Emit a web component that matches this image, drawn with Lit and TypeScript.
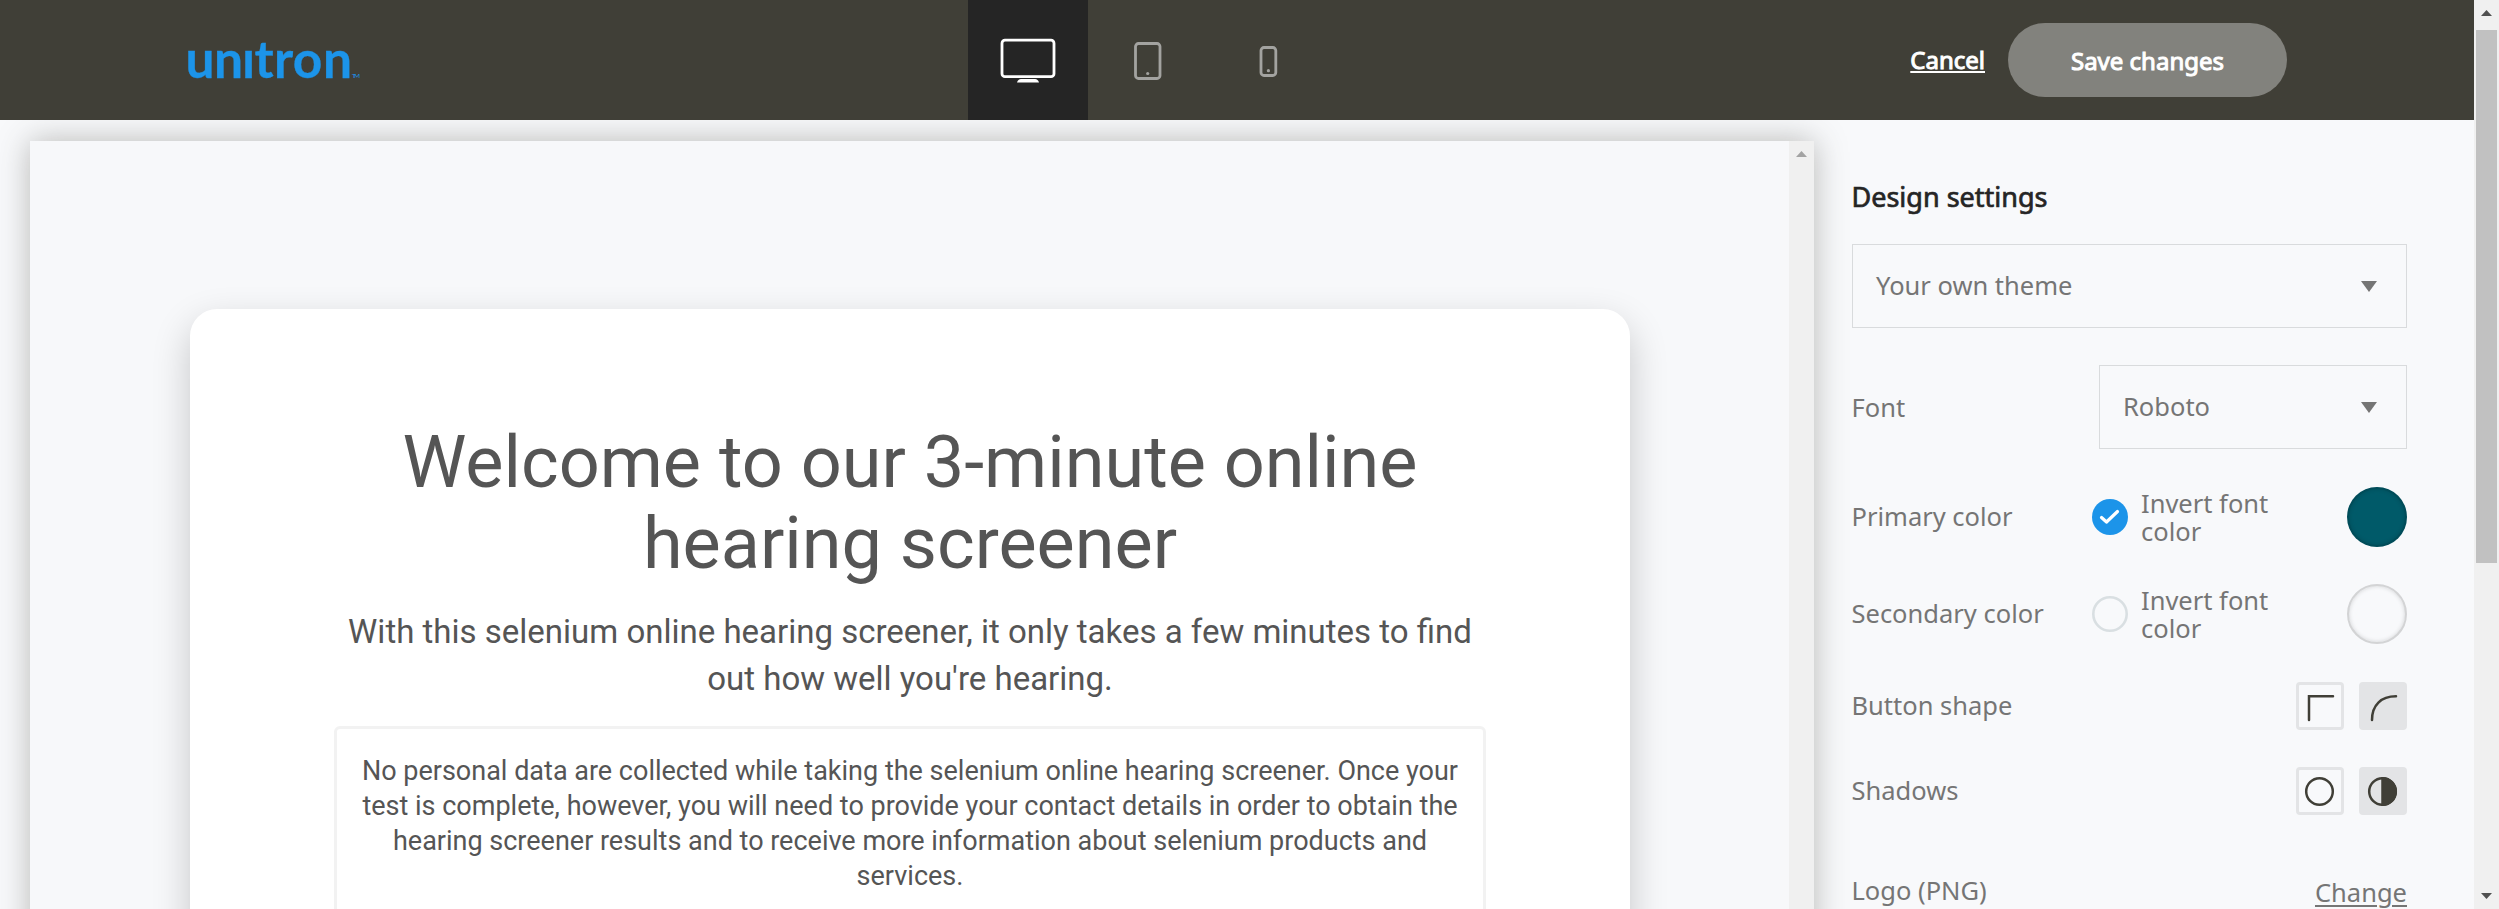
import { LitElement, html, css, svg } from "lit";
import { customElement, property } from "lit/decorators.js";

@customElement("scroll-bar")
class ScrollBar extends LitElement {
  @property({ type: Boolean }) page = false;
  static styles = css`
    :host { display: flex; flex-direction: column; width: 25px; background: #f0f0f0; flex: none; }
    .btn { height: 30px; flex: none; display: block; }
    .thumb { height: 533px; margin: 0 2px; background: #c1c1c1; }
    .gap { flex: 1; }
    .last { height: 26px; flex: none; display: block; }
  `;
  render() {
    return html`
      <svg class="btn" width="25" height="30"><path d="M7 16 L12.5 10 L18 16Z" fill=${this.page ? "#505050" : "#a3a3a3"} /></svg>
      ${this.page
        ? html`<div class="thumb"></div><div class="gap"></div>
            <svg class="last" width="25" height="26"><path d="M7 10 L18 10 L12.5 16Z" fill="#505050" /></svg>`
        : ""}
    `;
  }
}

@customElement("top-bar")
class TopBar extends LitElement {
  static styles = css`
    :host { display: flex; height: 120px; background: #403f37; position: relative; z-index: 1; font-family: "Noto Sans", sans-serif; color: #fff; }
    svg { display: block; }
    .brand { width: 968px; flex: none; }
    .device { width: 120px; height: 120px; flex: none; }
    .active { background: #252525; }
    .actions { margin-left: auto; padding-right: 187px; display: flex; align-items: center; gap: 23px; font-size: 24px; line-height: 36px; -webkit-text-stroke: 1px #fff; }
    .cancel { text-decoration: underline; text-decoration-thickness: 2px; text-underline-offset: 2px; }
    .save { box-sizing: border-box; width: 279px; height: 74px; border-radius: 37px; background: #82827d; text-align: center; line-height: 76px; }
  `;
  render() {
    return html`
      <svg class="brand" width="968" height="120" fill="#1c94e9">
        <text x="185.5 214 242 254.5 274 292.8 323" y="78.3" font-family="Lato, sans-serif" font-weight="700" font-size="51.5" stroke="#1c94e9" stroke-width="0.3">unıtron</text>
        <text x="352" y="78" font-family="Lato, sans-serif" font-size="6.5" textLength="8">TM</text>
      </svg>
      <svg class="device active" width="120" height="120">
        <rect x="34" y="40.2" width="52" height="36.5" rx="3" fill="none" stroke="#fff" stroke-width="2.8" />
        <path d="M49 82.5 q1-3.5 4-3.5 h14 q3 0 4 3.5z" fill="#fff" />
      </svg>
      <svg class="device" width="120" height="120">
        <rect x="47.5" y="43.5" width="24.5" height="35" rx="3" fill="none" stroke="#a3a3a0" stroke-width="2.8" />
        <circle cx="59.7" cy="73.5" r="1.6" fill="#a3a3a0" />
      </svg>
      <svg class="device" width="120" height="120">
        <rect x="53" y="47.5" width="14.8" height="28" rx="3" fill="none" stroke="#a3a3a0" stroke-width="2.8" />
        <circle cx="60.4" cy="70.7" r="1.6" fill="#a3a3a0" />
      </svg>
      <div class="actions"><span class="cancel">Cancel</span><div class="save">Save changes</div></div>
    `;
  }
}

@customElement("screener-preview")
class ScreenerPreview extends LitElement {
  static styles = css`
    :host { display: flex; width: 1784px; height: 900px; flex: none; background: #f7f8fa; font-family: Roboto, sans-serif; color: #555; box-shadow: 0 0 30px rgba(64, 63, 55, 0.35); }
    .view { flex: 1; padding: 168px 159px 0 160px; overflow: hidden; }
    .card { box-sizing: border-box; height: 900px; border-radius: 27px; background: #fff; padding: 113px 144px 0; box-shadow: 0 15px 38px rgba(0, 0, 0, 0.2); text-align: center; }
    h1 { margin: 0; font-weight: 400; font-size: 72px; line-height: 81px; }
    .lead { margin: 24px 0 24px; font-size: 33px; line-height: 47px; }
    .note { box-sizing: border-box; height: 400px; border: 3px solid #f2f2f2; border-radius: 6px; padding: 25px 20px; font-size: 27px; line-height: 35px; }
    .line { display: block; white-space: nowrap; }
  `;
  render() {
    return html`
      <div class="view">
        <div class="card">
          <h1><span class="line">Welcome to our 3-minute online</span><span class="line">hearing screener</span></h1>
          <div class="lead"><span class="line">With this selenium online hearing screener, it only takes a few minutes to find</span><span class="line">out how well you're hearing.</span></div>
          <div class="note">
            <span class="line">No personal data are collected while taking the selenium online hearing screener. Once your</span>
            <span class="line">test is complete, however, you will need to provide your contact details in order to obtain the</span>
            <span class="line">hearing screener results and to receive more information about selenium products and</span>
            <span class="line">services.</span>
          </div>
        </div>
      </div>
      <scroll-bar></scroll-bar>
    `;
  }
}

@customElement("design-settings")
class DesignSettings extends LitElement {
  static styles = css`
    :host { display: block; box-sizing: border-box; width: 593px; padding: 36px 0 0 38px; font-family: "Noto Sans", sans-serif; font-size: 25.5px; line-height: 28px; color: #757575; }
    svg { display: block; }
    h2 { margin: 0 0 27px -0.5px; font-size: 27px; line-height: 40px; font-weight: 400; color: #252525; -webkit-text-stroke: 0.7px #252525; }
    .select { box-sizing: border-box; width: 555px; height: 84px; border: 1px solid #d9dbdd; display: flex; align-items: center; justify-content: space-between; padding: 0 29px 0 23px; }
    .row { display: flex; align-items: center; width: 555px; }
    .label { box-sizing: border-box; width: 247.5px; margin-left: -0.5px; flex: none; padding-bottom: 3px; }
    .select span { padding-bottom: 2px; }
    .font { margin-top: 37px; }
    .font .select { width: 308px; }
    .font .label { padding-bottom: 1px; }
    .primary { margin-top: 38px; height: 60px; }
    .secondary { margin-top: 37px; height: 60px; }
    .check { margin-left: -7px; width: 36px; height: 36px; margin-right: 13px; flex: none; }
    .invert { width: 150px; }
    .swatch { box-sizing: border-box; width: 60px; height: 60px; border-radius: 50%; margin-left: auto; border: 2px solid rgba(0, 0, 0, 0.15); box-shadow: inset 0 0 4px rgba(0, 0, 0, 0.15); }
    .teal { background: #005a69; }
    .shape { margin-top: 38px; height: 48px; }
    .shadows { margin-top: 37px; height: 48px; }
    .options { display: flex; gap: 15px; margin-left: auto; }
    .opt { box-sizing: border-box; width: 48px; height: 48px; border: 3px solid #e3e4e6; border-radius: 4px; }
    .on { background: #e3e4e6; }
    .logo { margin-top: 61px; align-items: flex-start; }
    .change { margin-left: auto; padding-top: 2px; text-decoration: underline; text-decoration-thickness: 2px; text-underline-offset: 3px; }
  `;
  arrow() {
    return html`<svg width="16" height="11"><path d="M0 0H16L8 11Z" fill="#757575" /></svg>`;
  }
  option(on: boolean, glyph: unknown) {
    return html`<div class="opt ${on ? "on" : ""}"><svg width="42" height="42" fill="none" stroke="#403f37" stroke-width="2.5">${glyph}</svg></div>`;
  }
  render() {
    return html`
      <h2>Design settings</h2>
      <div class="select"><span>Your own theme</span>${this.arrow()}</div>
      <div class="row font"><div class="label">Font</div><div class="select"><span>Roboto</span>${this.arrow()}</div></div>
      <div class="row primary">
        <div class="label">Primary color</div>
        <svg class="check" width="36" height="36"><circle cx="18" cy="18" r="18" fill="#1c94e9" /><path d="M9.5 18.5 L14.5 23 L25.5 12.5" fill="none" stroke="#fff" stroke-width="3.2" stroke-linecap="round" stroke-linejoin="round" /></svg>
        <div class="invert">Invert font color</div>
        <div class="swatch teal"></div>
      </div>
      <div class="row secondary">
        <div class="label">Secondary color</div>
        <svg class="check" width="36" height="36"><circle cx="18" cy="18" r="16.7" fill="none" stroke="#d9dfe2" stroke-width="2.6" /></svg>
        <div class="invert">Invert font color</div>
        <div class="swatch"></div>
      </div>
      <div class="row shape">
        <div class="label">Button shape</div>
        <div class="options">
          ${this.option(false, svg`<path d="M10 35V11.3H34" stroke-linecap="round" />`)}
          ${this.option(true, svg`<path d="M10 35C10 20 19 11.3 34 11.3" stroke-linecap="round" />`)}
        </div>
      </div>
      <div class="row shadows">
        <div class="label">Shadows</div>
        <div class="options">
          ${this.option(false, svg`<circle cx="20.5" cy="21.5" r="13.3" />`)}
          ${this.option(true, svg`<circle cx="20.5" cy="21.5" r="13.3" /><path d="M20.5 8.2A13.3 13.3 0 0 1 20.5 34.8Z" fill="#403f37" />`)}
        </div>
      </div>
      <div class="row logo"><div class="label">Logo (PNG)</div><div class="change">Change</div></div>
    `;
  }
}

@customElement("app-root")
class AppRoot extends LitElement {
  static styles = css`
    :host { display: flex; width: 2499px; height: 909px; overflow: hidden; background: #f8f9fb; }
    .main { flex: 1; }
    .body { display: flex; padding: 21px 0 0 30px; }
  `;
  render() {
    return html`
      <div class="main">
        <top-bar></top-bar>
        <div class="body"><screener-preview></screener-preview><design-settings></design-settings></div>
      </div>
      <scroll-bar page></scroll-bar>
    `;
  }
}
